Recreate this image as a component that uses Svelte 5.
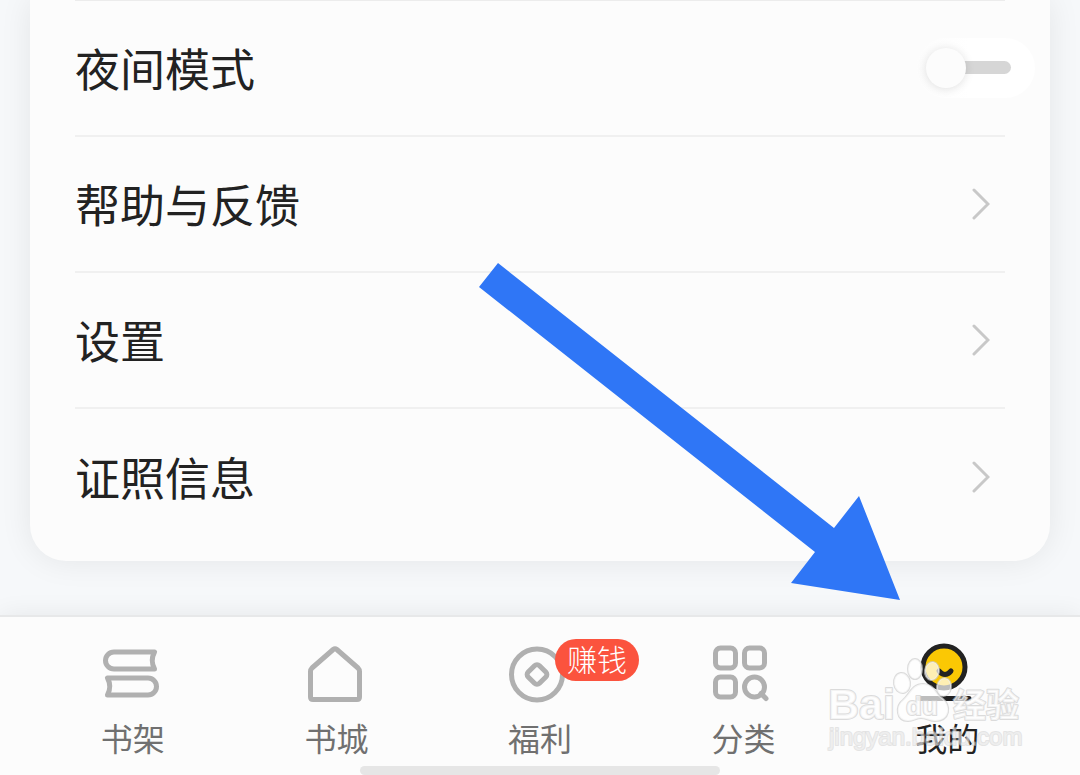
<script lang="ts">
  type Tab = {
    id: string;
    label: string;
    badge?: string;
  };

  const links = [
    { id: 'help', label: '帮助与反馈' },
    { id: 'settings', label: '设置' },
    { id: 'license', label: '证照信息' }
  ];

  const tabs: Tab[] = [
    { id: 'shelf', label: '书架' },
    { id: 'store', label: '书城' },
    { id: 'welfare', label: '福利', badge: '赚钱' },
    { id: 'category', label: '分类' },
    { id: 'mine', label: '我的' }
  ];

  let nightMode = $state(false);
  let active = $state('mine');
</script>

<div class="page">
  <main class="card">
    <div class="row">
      <label for="night">夜间模式</label>
      <input id="night" class="switch" type="checkbox" role="switch" bind:checked={nightMode} />
    </div>
    {#each links as link}
      <a class="row" href={`#${link.id}`}>
        <span>{link.label}</span>
        <svg class="chevron" viewBox="0 0 20 32" aria-hidden="true">
          <path d="M4 2 L18 16 L4 30" />
        </svg>
      </a>
    {/each}
  </main>

  <nav class="tabs">
    {#each tabs as tab}
      <a
        class="tab"
        class:active={active === tab.id}
        href={`#${tab.id}`}
        onclick={() => (active = tab.id)}
      >
        <span class="icon">
          <svg viewBox="0 0 60 60" aria-hidden="true">
            {#if tab.id === 'shelf'}
              <path d="M54.500 9 H14 A8.500 8.500 0 0 0 14 26 H54.500 Q50 17.500 54.500 9 Z" />
              <path d="M7.500 35 H48 A8.500 8.500 0 0 1 48 52 H7.500 Q12 43.500 7.500 35 Z" />
            {:else if tab.id === 'store'}
              <path d="M30.200 6.500 Q32 5 33.800 6.500 L55 25 Q56.500 26.500 56.500 28.500 V54 Q56.500 56.500 54 56.500 H10 Q7.500 56.500 7.500 54 V28.500 Q7.500 26.500 9 25 Z" />
            {:else if tab.id === 'welfare'}
              <circle cx="30" cy="31.500" r="25.500" />
              <rect x="22" y="23.500" width="16" height="16" rx="3.500" transform="rotate(45 30 31.500)" />
            {:else if tab.id === 'category'}
              <rect x="4.500" y="5" width="20" height="20" rx="5" />
              <rect x="33.500" y="5" width="20" height="20" rx="5" />
              <rect x="4.500" y="34" width="20" height="20" rx="5" />
              <circle cx="43.500" cy="44" r="10" />
              <path d="M50 50.500 L55 55.500" />
            {:else}
              <circle class="face" cx="30" cy="24" r="21" />
              <path d="M25 28 Q31 35 37 28" />
              <path d="M5 55.500 H55" />
            {/if}
          </svg>
          {#if tab.badge}<b class="badge">{tab.badge}</b>{/if}
        </span>
        <span>{tab.label}</span>
      </a>
    {/each}
    <div class="home-bar"></div>

    <svg class="watermark" viewBox="0 0 200 100" aria-hidden="true">
      <g class="paw">
        <ellipse cx="76" cy="28" rx="8" ry="10" transform="rotate(-8 76 28)" />
        <ellipse cx="89" cy="14" rx="7" ry="10" />
        <ellipse cx="106" cy="16" rx="7" ry="9" transform="rotate(8 106 16)" />
        <ellipse cx="118" cy="32" rx="7" ry="9" transform="rotate(10 118 32)" />
        <path d="M97 29 C109 29 109 39 116 43 C126 51 124 66 109 66 C104 66 100 63 95 63 C90 63 88 66 82 66 C70 66 69 51 77 45 C84 39 86 29 97 29 Z" />
      </g>
      <text class="brand" x="2" y="64">Bai</text>
      <text class="du" x="80" y="60">du</text>
      <text class="brand cn" x="127" y="62">经验</text>
      <text class="site" x="3" y="90">jingyan.baidu.com</text>
    </svg>
  </nav>

  <svg class="arrow" viewBox="0 0 421 337" aria-hidden="true">
    <path d="M19 0 L355 265 L380 233 L421 337 L312 320 L336 289 L0 24 Z" />
  </svg>
</div>

<style>
  :global(body) {
    background: #f6f8fa;
    overflow: hidden;
  }

  .page {
    position: relative;
    display: flex;
    flex-direction: column;
    min-height: 100vh;
    overflow: hidden;
    font-family: 'Noto Sans CJK SC', sans-serif;
    color: #222;
  }

  .card {
    margin: 0 30px;
    padding: 0 45px 17px;
    border-radius: 0 0 36px 36px;
    background: #fcfcfc;
    box-shadow: 0 0 32px rgba(0, 0, 0, 0.08);
  }

  .row {
    display: flex;
    align-items: center;
    justify-content: space-between;
    height: 136px;
    box-sizing: border-box;
    border-bottom: 2px solid #f0f0f0;
    font-size: 45px;
    line-height: 64px;
    font-weight: 400;
    color: inherit;
    text-decoration: none;
  }

  .row:first-child {
    height: 137px;
    border-top: 1px solid #ececec;
  }

  .row:last-child {
    height: 135px;
    border-bottom: none;
  }

  .chevron {
    width: 20px;
    height: 32px;
    margin-right: 15px;
    fill: none;
    stroke: #c8c8c8;
    stroke-width: 3;
    stroke-linecap: round;
  }

  .switch {
    appearance: none;
    position: relative;
    width: 119px;
    height: 60px;
    margin: 0 -30px 0 0;
    border-radius: 30px;
    background: linear-gradient(90deg, #fcfcfc, #fff 45%);
  }

  .switch::before,
  .switch::after {
    content: '';
    position: absolute;
  }

  .switch::before {
    left: 24px;
    right: 24px;
    top: 23px;
    height: 13px;
    border-radius: 7px;
    background: #d6d6d6;
  }

  .switch::after {
    left: 10px;
    top: 10px;
    width: 40px;
    height: 40px;
    border-radius: 50%;
    background: #fcfcfc;
    box-shadow: 0 1px 10px rgba(0, 0, 0, 0.12);
  }

  .switch:checked::after {
    left: 69px;
  }

  .tabs {
    position: relative;
    display: flex;
    flex: 1;
    margin-top: 54px;
    padding: 26px 31px 0;
    border-top: 2px solid #e7e8e9;
    background: #fcfcfc;
    box-shadow: 0 0 24px rgba(0, 0, 0, 0.07);
  }

  .tab {
    display: flex;
    flex: 1;
    flex-direction: column;
    align-items: center;
    gap: 10px;
    font-size: 32px;
    line-height: 48px;
    font-weight: 400;
    color: #707070;
    text-decoration: none;
  }

  .icon {
    position: relative;
    width: 66px;
    height: 60px;
  }

  .icon svg {
    display: block;
    width: 60px;
    height: 60px;
    fill: none;
    stroke: #b0b0b0;
    stroke-width: 5;
    stroke-linecap: round;
    stroke-linejoin: round;
  }

  .tab.active {
    color: #222;
  }

  .active .icon svg {
    stroke: #222;
  }

  .active .face {
    fill: #fbc804;
  }

  .badge {
    position: absolute;
    left: 48px;
    top: -4px;
    width: 84px;
    padding-bottom: 4px;
    border-radius: 21px;
    background: #fb533e;
    color: #fff;
    font-size: 30px;
    line-height: 38px;
    font-weight: 300;
    text-align: center;
  }

  .home-bar {
    position: absolute;
    left: 33.333%;
    right: 33.333%;
    bottom: 0;
    height: 9px;
    border-radius: 5px;
    background: #e6e6e6;
  }

  .watermark {
    position: absolute;
    right: 54px;
    bottom: 20px;
    width: 200px;
    height: 100px;
    fill: rgba(255, 255, 255, 0.7);
    stroke: rgba(205, 205, 205, 0.7);
    stroke-width: 2;
    stroke-linejoin: round;
    paint-order: stroke;
    pointer-events: none;
  }

  .brand,
  .du,
  .site {
    font-family: 'Liberation Sans', 'Noto Sans CJK SC', sans-serif;
    font-weight: 700;
  }

  .brand {
    font-size: 43px;
  }

  .cn {
    font-size: 33px;
  }

  .du {
    font-size: 26px;
  }

  .site {
    fill: rgba(255, 255, 255, 0.4);
    stroke: rgba(205, 205, 205, 0.5);
    font-size: 24px;
    font-weight: 400;
  }

  .arrow {
    position: absolute;
    left: 479px;
    top: 263px;
    width: 421px;
    height: 337px;
    fill: #2f76f6;
    pointer-events: none;
  }
</style>
